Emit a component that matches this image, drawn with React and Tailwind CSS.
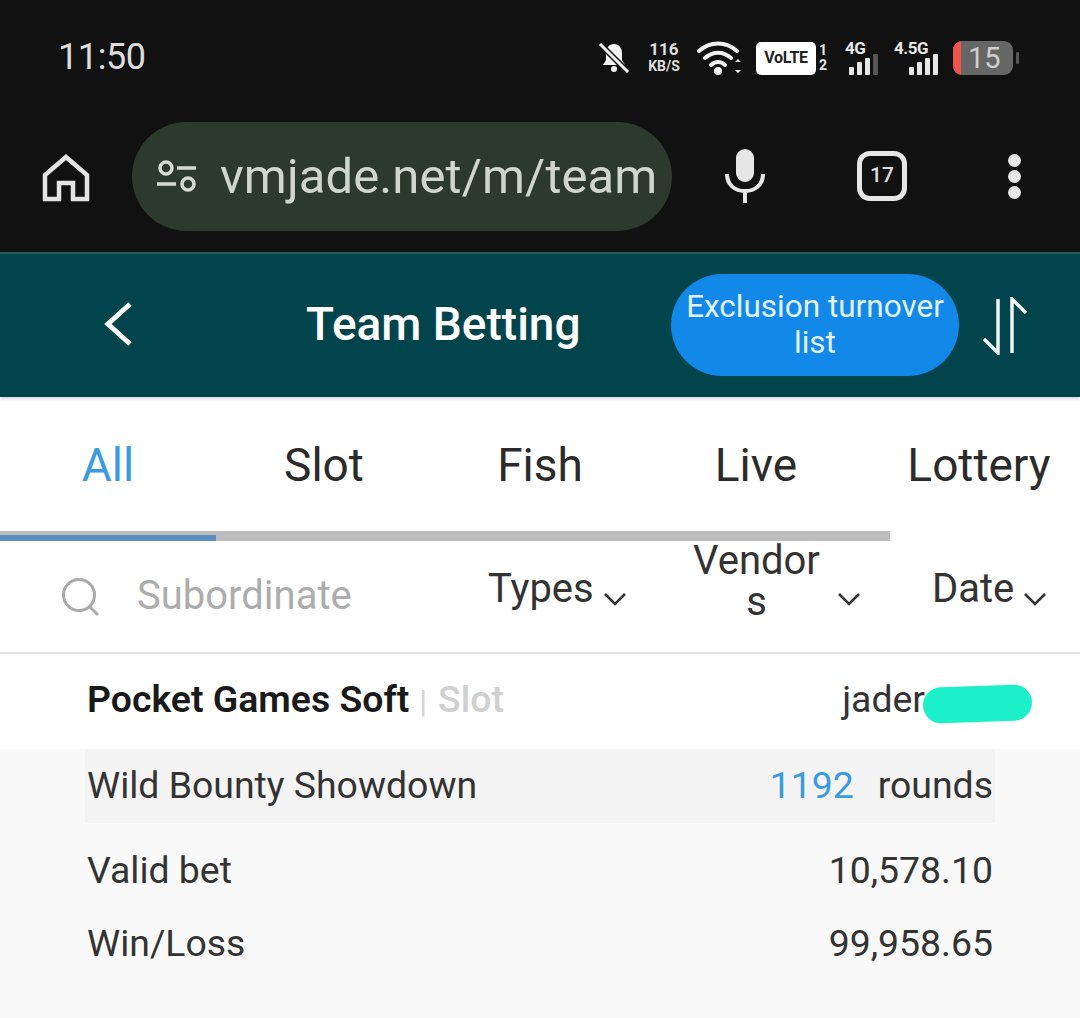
import React from "react";

const font = { fontFamily: "Roboto, 'Liberation Sans', sans-serif" };

function Bars({ dim }) {
  const heights = [8, 13, 17, 21];
  return (
    <div className="flex items-end gap-[3px]">
      {heights.map((h, i) => (
        <div
          key={i}
          style={{ height: h }}
          className={`w-[5px] rounded-[1px] ${dim && i === 3 ? "bg-[#555555]" : "bg-[#e8e8e8]"}`}
        />
      ))}
    </div>
  );
}

function Signal({ label, dim, width }) {
  return (
    <div style={{ width }} className="relative h-[34px] shrink-0">
      <span className="absolute left-0 top-[-3px] text-[17px] leading-[20px] font-bold text-[#e8e8e8] tracking-[-0.5px]">{label}</span>
      <div className="absolute right-0 bottom-0">
        <Bars dim={dim} />
      </div>
    </div>
  );
}

function StatusBar() {
  return (
    <div className="h-[116px] flex items-start pt-[36px] pl-[58px]">
      <span className="text-[36px] leading-[42px] text-[#dddddd] tracking-[-0.4px]">11:50</span>
      <div className="ml-auto mr-[61px] -mt-[1px] flex items-center h-[46px]">
        <svg width="34" height="34" viewBox="0 0 34 34" className="shrink-0">
          <path d="M17 3c-5 0-8 4-8 9v7l-3 5h22l-3-5v-7c0-5-3-9-8-9z" fill="#f2f2f2" />
          <circle cx="17" cy="28" r="3" fill="#f2f2f2" />
          <path d="M3 3l28 28" stroke="#111111" strokeWidth="6" />
          <path d="M3 3l28 28" stroke="#f2f2f2" strokeWidth="3" />
        </svg>
        <div className="ml-[14px] w-[38px] -mt-[3px] flex flex-col items-center font-bold text-[#dedede]">
          <span className="text-[17px] leading-[18px]">116</span>
          <span className="text-[14px] leading-[16px]">KB/S</span>
        </div>
        <svg width="46" height="36" viewBox="0 0 46 36" className="ml-[14px] shrink-0">
          <path d="M2 11c11-10 27-10 38 0M8 18c8-7 18-7 26 0M14 25c4-4 10-4 14 0" fill="none" stroke="#f2f2f2" strokeWidth="4" strokeLinecap="round" />
          <circle cx="21" cy="31" r="4" fill="#f2f2f2" />
          <path d="M38 22l3-3 3 3zM38 30l3 3 3-3z" fill="#f2f2f2" />
        </svg>
        <div className="ml-[13px] w-[60px] h-[33px] rounded-[5px] bg-white flex items-center justify-center text-[#222222] text-[16px] font-bold tracking-[-0.3px]">
          VoLTE
        </div>
        <div className="ml-[2px] w-[10px] flex flex-col items-center text-[14px] leading-[15px] font-bold text-[#e8e8e8]">
          <span>1</span>
          <span>2</span>
        </div>
        <div className="ml-[17px]">
          <Signal label="4G" dim width={33} />
        </div>
        <div className="ml-[16px]">
          <Signal label="4.5G" width={44} />
        </div>
        <div className="ml-[15px] relative w-[60px] h-[34px] rounded-[9px] bg-[#666666] overflow-hidden shrink-0">
          <div className="absolute left-0 top-0 bottom-0 w-[8px] bg-[#f0544c]" />
          <span className="absolute left-[15px] top-0 text-[29px] leading-[34px] text-[#cfcfcf]">15</span>
        </div>
        <div className="ml-[3px] w-[3px] h-[12px] rounded-[1px] bg-[#555555]" />
      </div>
    </div>
  );
}

function BrowserBar() {
  return (
    <div className="h-[136px] flex items-start">
      <div className="w-[132px] pt-[38px] pl-[42px] shrink-0">
        <svg width="48" height="48" viewBox="0 0 48 48">
          <path d="M24 3L3 21v24h14V29h14v16h14V21z" fill="none" stroke="#e4e4e4" strokeWidth="4.5" strokeLinejoin="miter" />
        </svg>
      </div>
      <div className="mt-[6px] w-[540px] h-[109px] rounded-full bg-[#2c3a2e] flex items-center pl-[24px] pr-[18px] shrink-0">
        <svg width="42" height="36" viewBox="0 0 42 36" className="shrink-0">
          <circle cx="10" cy="9" r="6" fill="none" stroke="#d4dbd2" strokeWidth="3.5" />
          <path d="M21 9h19M1 25h19" stroke="#d4dbd2" strokeWidth="3.5" />
          <circle cx="32" cy="25" r="6" fill="none" stroke="#d4dbd2" strokeWidth="3.5" />
        </svg>
        <div className="ml-[22px] overflow-hidden whitespace-nowrap text-[49px] leading-[60px] text-[#cfd6cd] tracking-[0.1px]">
          vmjade.net/m/team
        </div>
      </div>
      <div className="mt-[33px] ml-[53px] w-[40px] shrink-0">
        <svg width="40" height="54" viewBox="0 0 40 54">
          <rect x="11" y="0" width="18" height="33" rx="9" fill="#e6e6e6" />
          <path d="M2 25c0 11 8 17 18 17s18-6 18-17" fill="none" stroke="#e6e6e6" strokeWidth="4" />
          <path d="M20 42v12" stroke="#e6e6e6" strokeWidth="4" />
        </svg>
      </div>
      <div className="mt-[35px] ml-[92px] w-[50px] h-[50px] rounded-[13px] border-[5px] border-[#e6e6e6] flex items-center justify-center text-[21px] font-medium text-[#dcdcdc] shrink-0">
        17
      </div>
      <div className="mt-[38px] ml-[101px] flex flex-col gap-[3px] shrink-0">
        <div className="w-[13px] h-[13px] rounded-full bg-[#e6e6e6]" />
        <div className="w-[13px] h-[13px] rounded-full bg-[#e6e6e6]" />
        <div className="w-[13px] h-[13px] rounded-full bg-[#e6e6e6]" />
      </div>
    </div>
  );
}

function AppHeader() {
  return (
    <div className="h-[145px] bg-[#02444c] border-t-2 border-[#2c5a5c] flex items-center shadow-[0_2px_3px_rgba(0,0,0,0.15)] relative">
      <div className="w-[671px] shrink-0 flex items-center relative h-full">
        <svg width="30" height="46" viewBox="0 0 30 46" className="absolute left-[103px] top-[47px]">
          <path d="M27 3L5 23l22 20" fill="none" stroke="#ffffff" strokeWidth="5" />
        </svg>
        <span className="absolute left-[306px] top-[41px] text-[46px] leading-[58px] font-medium text-white whitespace-nowrap">
          Team Betting
        </span>
      </div>
      <div className="w-[288px] h-[102px] mb-[2px] rounded-full bg-[#1288e8] text-[#e2f3ff] text-[31.5px] leading-[36px] text-center flex items-center justify-center shrink-0">
        <span>
          Exclusion turnover
          <br />
          list
        </span>
      </div>
      <svg width="46" height="58" viewBox="0 0 46 58" className="ml-[23px] shrink-0">
        <path d="M16 2v54L2 42" fill="none" stroke="#eef6f6" strokeWidth="3.5" />
        <path d="M30 56V2l14 14" fill="none" stroke="#eef6f6" strokeWidth="3.5" />
      </svg>
    </div>
  );
}

function Tabs() {
  const tabs = ["All", "Slot", "Fish", "Live", "Lottery"];
  return (
    <div className="bg-white">
      <div className="h-[134px] pt-[2px] flex">
        {tabs.map((t, i) => (
          <div
            key={t}
            className={`w-[216px] shrink-0 flex items-center justify-center text-[46px] whitespace-nowrap ${
              i === 0 ? "text-[#3a9be0]" : "text-[#2b2b2b]"
            } ${i === 4 ? "pl-[14px]" : ""}`}
          >
            {t}
          </div>
        ))}
      </div>
      <div className="w-[890px] h-[10px] bg-[#bdbdbd] flex items-end">
        <div className="w-[216px] h-[6px] bg-[#5b8fc0]" />
      </div>
    </div>
  );
}

function Chevron({ className }) {
  return (
    <svg width="24" height="14" viewBox="0 0 24 14" className={className}>
      <path d="M2 2l10 10L22 2" fill="none" stroke="#333333" strokeWidth="2.5" />
    </svg>
  );
}

function Filters() {
  return (
    <div className="h-[113px] bg-white flex border-b-2 border-[#e2e2e2] text-[40px] text-[#333333]">
      <div className="w-[432px] flex items-center pl-[61px] shrink-0">
        <svg width="40" height="40" viewBox="0 0 40 40" className="shrink-0">
          <circle cx="18" cy="18" r="15.5" fill="none" stroke="#aaaaaa" strokeWidth="3" />
          <path d="M29 30l8 8" stroke="#aaaaaa" strokeWidth="3" />
        </svg>
        <span className="ml-[36px] -mt-[2px] text-[#adadad]">Subordinate</span>
      </div>
      <div className="w-[216px] flex items-center pl-[56px] shrink-0">
        <span className="leading-[46px] -mt-[16px]">Types</span>
        <Chevron className="ml-[9px] mt-[4px]" />
      </div>
      <div className="w-[216px] flex items-center pl-[45px] shrink-0">
        <span className="w-[127px] text-center break-all leading-[41px] -mt-[31px]">Vendors</span>
        <Chevron className="ml-[17px] mt-[4px]" />
      </div>
      <div className="w-[216px] flex items-center pl-[68px] shrink-0">
        <span className="leading-[46px] -mt-[16px]">Date</span>
        <Chevron className="ml-[9px] mt-[4px]" />
      </div>
    </div>
  );
}

function BetCard() {
  return (
    <div className="bg-[#f9f9f9] text-[37.4px] text-[#333333]">
      <div className="h-[95px] bg-white px-[87px] flex items-center justify-between relative">
        <div className="-mt-[5px] whitespace-nowrap">
          <span className="font-semibold text-[#1a1a1a]">Pocket Games Soft</span>
          <span className="text-[#d4d4d4] text-[32px] ml-[10px]">|</span>
          <span className="text-[#d0d0d0] font-medium ml-[11px]">Slot</span>
        </div>
        <span className="-mt-[5px] mr-[68px]">jader</span>
        <div className="absolute left-[923px] top-[32px] w-[109px] h-[36px] rounded-full bg-[#1cf0c8] -rotate-2" />
      </div>
      <div className="mx-[85px] h-[74px] px-[2px] pb-[2px] bg-[#f4f4f4] flex items-center justify-between">
        <span>Wild Bounty Showdown</span>
        <span>
          <span className="text-[#3a9be0]">1192</span>
          <span className="ml-[24px]">rounds</span>
        </span>
      </div>
      <div className="px-[87px] h-[84px] pt-[10px] flex items-center justify-between">
        <span>Valid bet</span>
        <span>10,578.10</span>
      </div>
      <div className="px-[87px] h-[72px] flex items-center justify-between">
        <span>Win/Loss</span>
        <span>99,958.65</span>
      </div>
    </div>
  );
}

export default function App() {
  return (
    <div style={font} className="w-[1080px] h-[1018px] overflow-hidden bg-[#f9f9f9]">
      <div className="bg-[#111111]">
        <StatusBar />
        <BrowserBar />
      </div>
      <AppHeader />
      <Tabs />
      <Filters />
      <BetCard />
    </div>
  );
}
